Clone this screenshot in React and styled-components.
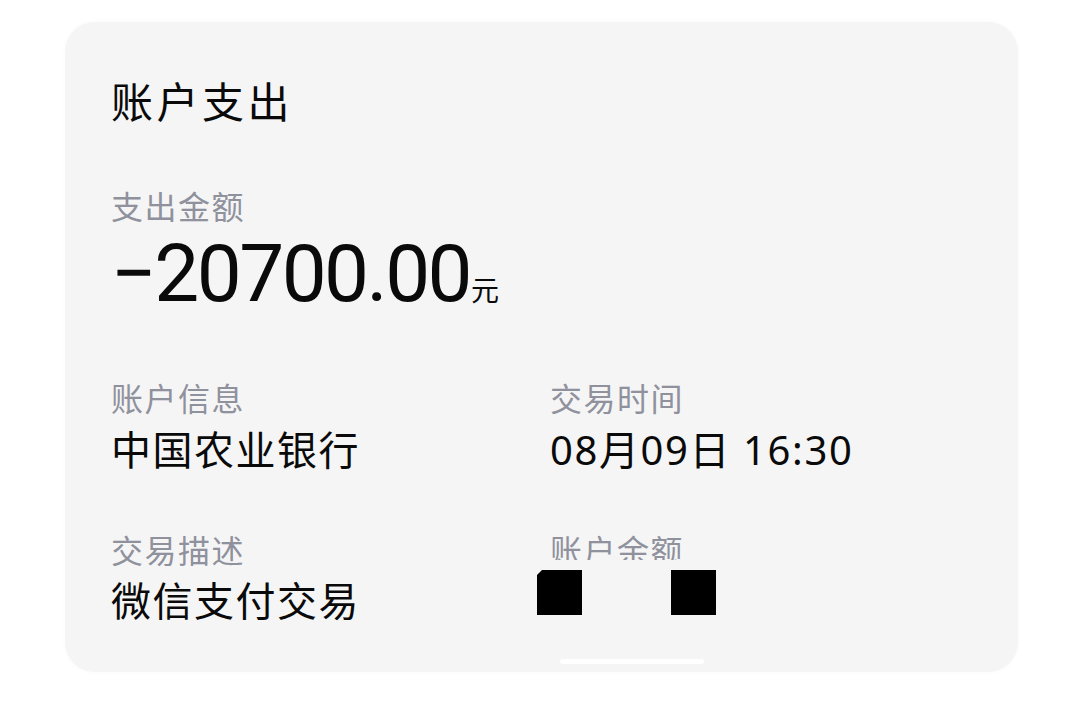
import React from 'react'
import styled, { createGlobalStyle } from 'styled-components'

const GlobalStyle = createGlobalStyle`
  html, body {
    margin: 0;
    padding: 0;
    background: #fff;
  }
  body {
    font-family: "Noto Sans", "Noto Sans CJK SC", sans-serif;
    color: #0a0a0a;
  }
`

const Page = styled.div`
  width: 1080px;
  height: 716px;
  padding: 22px 0 0 65px;
  box-sizing: border-box;
  overflow: hidden;
`

const Card = styled.section`
  width: 953px;
  height: 650px;
  box-sizing: border-box;
  padding: 59px 0 0 46px;
  background: #f5f5f5;
  border-radius: 30px;
  box-shadow: 0 0 4px 1px rgba(0, 0, 0, 0.02);
  display: flex;
  flex-direction: column;
`

const Title = styled.h1`
  margin: 0;
  font-size: 42px;
  line-height: 42px;
  font-weight: 400;
  letter-spacing: 3.5px;
`

const Label = styled.div`
  font-size: 32px;
  line-height: 32px;
  letter-spacing: 1.5px;
  color: #8f919d;
  margin-top: ${props => props.top || 0}px;
  ${props => props.clip && `height: ${props.clip}px; overflow: hidden;`}
`

const Amount = styled.div`
  margin-top: 11px;
  height: 80px;
  font-family: Roboto, "Noto Sans CJK SC", sans-serif;
  font-size: 80px;
  line-height: 80px;
  letter-spacing: -2.5px;
  display: flex;
  align-items: baseline;
`

const Unit = styled.span`
  font-family: "Noto Sans", "Noto Sans CJK SC", sans-serif;
  font-size: 28px;
  line-height: 28px;
  letter-spacing: 0;
  margin-left: 1px;
`

const InfoGrid = styled.div`
  display: grid;
  grid-template-columns: 439px 1fr;
`

const Field = styled.div`
  display: flex;
  flex-direction: column;
`

const Value = styled.div`
  margin-top: ${props => props.top || 15}px;
  font-size: 40px;
  line-height: 40px;
  letter-spacing: ${props => props.spacing || 1.5}px;
`

const Redacted = styled.div`
  margin-top: 10px;
  margin-left: -13px;
  display: flex;
  gap: 89px;
`

const Block = styled.span`
  width: 45px;
  height: 45px;
  background: #000;
  clip-path: ${props =>
    props.chipped ? 'polygon(5px 0, 100% 0, 100% 100%, 0 100%, 0 5px)' : 'none'};
`

const HomeBar = styled.div`
  margin-top: auto;
  margin-bottom: 8px;
  margin-left: 449px;
  width: 144px;
  height: 5px;
  border-radius: 3px;
  background: #fff;
`

export default function App() {
  return (
    <>
      <GlobalStyle />
      <Page>
        <Card>
          <Title>账户支出</Title>
          <Label top={68}>支出金额</Label>
          <Amount>
            −20700.00<Unit>元</Unit>
          </Amount>
          <InfoGrid>
            <Field>
              <Label top={69}>账户信息</Label>
              <Value>中国农业银行</Value>
            </Field>
            <Field>
              <Label top={69}>交易时间</Label>
              <Value spacing={1.6}>08月09日 16:30</Value>
            </Field>
            <Field>
              <Label top={65}>交易描述</Label>
              <Value top={14}>微信支付交易</Value>
            </Field>
            <Field>
              <Label top={65} clip={25}>账户余额</Label>
              <Redacted>
                <Block chipped />
                <Block />
              </Redacted>
            </Field>
          </InfoGrid>
          <HomeBar />
        </Card>
      </Page>
    </>
  )
}
